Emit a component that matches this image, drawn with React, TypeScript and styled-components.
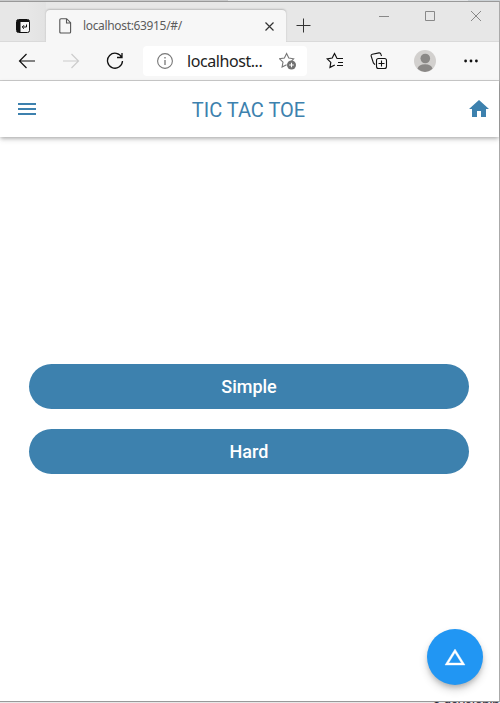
import React from "react";
import styled, { createGlobalStyle } from "styled-components";

const Global = createGlobalStyle`
  * { box-sizing: border-box; }
  html, body { margin: 0; overflow: hidden; }
  svg { display: block; flex: none; }
  button { border: 0; padding: 0; margin: 0; background: none; font: inherit; color: inherit; }
`;

const Desktop = styled.div`
  width: 500px;
  height: 703px;
  overflow: hidden;
  background: linear-gradient(90deg, #c9cacb 0 228px, #e2e4e6 228px 468px, #ccd2d6 468px) top / 100% 1px no-repeat #e8e8e8;
  padding-top: 1px;
`;

const BrowserWindow = styled.div`
  width: 500px;
  height: 701px;
  display: flex;
  flex-direction: column;
  border-top: 1px solid #999;
  border-right: 1px solid #aaa;
  border-bottom: 1px solid #999;
  background: #fff;
`;

const TitleBar = styled.header`
  height: 40px;
  flex: none;
  display: flex;
  align-items: flex-end;
  background: #e7e7e7;
  box-shadow: inset 0 -1px #dadada;
`;

const TabActions = styled.button`
  width: 46px;
  height: 39px;
  margin-bottom: 1px;
  display: flex;
  align-items: flex-start;
  padding: 17px 0 0 16px;
  background: linear-gradient(90deg, #e7e7e7 60%, #e2e2e2);
`;

const Tab = styled.div`
  width: 240px;
  height: 32px;
  display: flex;
  align-items: center;
  padding: 0 11px 0 13px;
  border-radius: 4px 4px 0 0;
  background: #f7f7f7;
  box-shadow: 0 -1px 2px rgba(0, 0, 0, 0.2);
`;

const TabTitle = styled.span`
  flex: 1;
  margin-left: 11px;
  font: 12px/16px "Noto Sans", "Open Sans", sans-serif;
  letter-spacing: -0.34px;
  color: #5c5c5c;
`;

const NewTab = styled.button`
  padding: 0 0 9px 10px;
`;

const WindowControls = styled.div`
  margin-left: auto;
  align-self: flex-start;
  display: flex;
  gap: 35px;
  padding: 9px 17px 0 0;
`;

const Toolbar = styled.nav`
  height: 39px;
  flex: none;
  display: flex;
  align-items: center;
  padding: 0 21px 1px 18px;
  background: #f7f7f7;
  border-bottom: 1px solid #ccc;
`;

const NavButtons = styled.div`
  display: flex;
  gap: 26px;
  width: 125px;
`;

const AddressBar = styled.div`
  width: 164px;
  height: 30px;
  display: flex;
  align-items: center;
  padding: 0 10px 0 14px;
  border-radius: 4px;
  background: #fff;
`;

const Address = styled.span`
  flex: 1;
  margin-left: 14px;
  font: 16px/24px "Noto Sans", "Open Sans", sans-serif;
  letter-spacing: -0.43px;
  color: #222;
`;

const Tools = styled.div`
  display: grid;
  grid-template-columns: 44px 44px 50px 14px;
  align-items: center;
  padding-left: 19px;
`;

const AppBar = styled.header`
  height: 56px;
  flex: none;
  display: grid;
  grid-template-columns: 54px 1fr 56px;
  align-items: center;
  background: #fff;
  color: #3d81ae;
  box-shadow: 0 2px 4px -1px rgba(0, 0, 0, 0.2), 0 4px 5px rgba(0, 0, 0, 0.07), 0 1px 4px rgba(0, 0, 0, 0.12);
`;

const AppTitle = styled.h1`
  margin: 0;
  padding-top: 2px;
  text-align: center;
  font: 400 20px/24px Roboto, sans-serif;
`;

const MenuButton = styled.button`
  padding-left: 15px;
`;

const HomeButton = styled.button`
  padding-left: 24px;
`;

const Body = styled.main`
  flex: 1;
  display: flex;
  flex-direction: column;
  justify-content: center;
  gap: 20px;
  padding: 0 30px 0 29px;
  position: relative;
`;

const LevelButton = styled.button`
  height: 45px;
  border-radius: 23px;
  background: #3d81ae;
  color: #fff;
  font: 500 18px/45px Roboto, sans-serif;
`;

const Fab = styled.button`
  position: absolute;
  right: 16px;
  bottom: 16px;
  width: 56px;
  height: 56px;
  display: grid;
  place-items: center;
  border-radius: 50%;
  background: #2196f3;
  box-shadow: 0 3px 5px -1px rgba(0, 0, 0, 0.2), 0 5px 9px rgba(0, 0, 0, 0.16);
`;

const PageBehind = styled.div`
  height: 1px;
  overflow: hidden;
  padding-left: 433px;
  font: 13px/6px "Liberation Sans", sans-serif;
  white-space: nowrap;
  color: #223;
`;

type StrokeProps = {
  w: number;
  h: number;
  d: string;
  color?: string;
  weight?: number;
};

const Stroke = ({ w, h, d, color = "#111", weight = 1.2 }: StrokeProps) => (
  <svg width={w} height={h} viewBox={`0 0 ${w} ${h}`} fill="none" stroke={color} strokeWidth={weight}>
    <path d={d} />
  </svg>
);

const TabActionsIcon = () => (
  <svg width="14" height="14" viewBox="0 0 14 14" fill="none" stroke="#111">
    <rect x=".5" y=".5" width="13" height="13" rx="2" fill="#f4f4f4" />
    <path d="M1 1h12v2H4.5V13H1Z" fill="#111" stroke="none" />
    <path d="M10.5 5.5v2.5H6.5M8 6.2l-1.8 1.8L8 9.8" strokeWidth="1" />
  </svg>
);

const InfoIcon = () => (
  <svg width="16" height="16" viewBox="0 0 16 16" fill="none" stroke="#777">
    <circle cx="8" cy="8" r="7.4" strokeWidth="1.1" />
    <path d="M8 7v5M8 4v1.4" strokeWidth="1.3" />
  </svg>
);

const AddFavoriteIcon = () => (
  <svg width="18" height="18" viewBox="0 0 18 18" fill="none" stroke="#777">
    <path d="M7.6 12.8 3.1 15l.9-4.8L.6 6.8l4.8-.7L7.6 1.5l2.2 4.6 4.8.7-2 2" strokeWidth="1.1" />
    <circle cx="12.5" cy="13" r="4.5" fill="#717171" stroke="none" />
    <path d="M12.5 10.7v4.6M10.2 13h4.6" stroke="#fff" strokeWidth="1.1" />
  </svg>
);

const CollectionsIcon = () => (
  <svg width="18" height="18" viewBox="0 0 18 18" fill="none" stroke="#111" strokeWidth="1.1">
    <path d="M5 12.6 3.4 11 1.1 3.8Q1 2.5 2.3 2.2L9 .9q1.5-.2 1.9 1.3l.6 1.8" />
    <rect x="6.5" y="6.5" width="10" height="10" rx="2" fill="#f7f7f7" />
    <path d="M11.5 8.5v6M8.5 11.5h6" />
  </svg>
);

const ProfileIcon = () => (
  <svg width="22" height="22" viewBox="0 0 22 22">
    <circle cx="11" cy="11" r="11" fill="#d2d0ce" />
    <circle cx="11.3" cy="8.5" r="4.8" fill="#8a8886" />
    <path d="M3.5 18.8q1-4.5 7.5-4.5t7.5 4.5Q15 22 11 22t-7.5-3.2Z" fill="#8a8886" />
  </svg>
);

export default function App() {
  return (
    <Desktop>
      <Global />
      <BrowserWindow>
        <TitleBar>
          <TabActions aria-label="Tab actions"><TabActionsIcon /></TabActions>
          <Tab>
            <Stroke w={13} h={16} color="#555" weight={1.1} d="M2 .7h5.6l4 4V14q0 1-1 1H2Q.8 15 .8 14V1.7Q.8.7 2 .7M7.5.7V5h4.2" />
            <TabTitle>localhost:63915/#/</TabTitle>
            <Stroke w={11} h={11} color="#333" weight={1.2} d="m1.5 1.5 8 8m0-8-8 8" />
          </Tab>
          <NewTab aria-label="New tab">
            <Stroke w={15} h={15} color="#333" weight={1} d="M7.5.5v14M.5 7.5h14" />
          </NewTab>
          <WindowControls>
            <Stroke w={11} h={11} color="#888" weight={1} d="M0 5.5h10" />
            <Stroke w={11} h={11} color="#888" weight={1} d="M.5 .5h9v9h-9Z" />
            <Stroke w={11} h={11} color="#888" weight={1} d="m0 0 10 10m0-10-10 10" />
          </WindowControls>
        </TitleBar>
        <Toolbar>
          <NavButtons>
            <Stroke w={18} h={18} d="M17 9H1.5M8.5 2l-7 7 7 7" />
            <Stroke w={18} h={18} color="#ccc" d="M1 9h15.5m-7-7 7 7-7 7" />
            <Stroke w={18} h={18} weight={1.3} d="M15.8 5.5a7.5 7.5 0 1 0 .7 3.5M11 5.5h5V1" />
          </NavButtons>
          <AddressBar>
            <InfoIcon />
            <Address>localhost...</Address>
            <AddFavoriteIcon />
          </AddressBar>
          <Tools>
            <Stroke w={18} h={17} d="M10.8 6 8.5 1.5 6.2 6l-5 .8 3.6 3.6-.8 5L8.8 13M10.5 6.5H17M12 10.5h5M11 13.5h6" />
            <CollectionsIcon />
            <ProfileIcon />
            <svg width="14" height="4" viewBox="0 0 14 4" fill="#111">
              <circle cx="1.6" cy="2" r="1.4" /><circle cx="7" cy="2" r="1.4" /><circle cx="12.4" cy="2" r="1.4" />
            </svg>
          </Tools>
        </Toolbar>
        <AppBar>
          <MenuButton aria-label="Menu">
            <svg width="24" height="24" viewBox="0 0 24 24" fill="currentColor"><path d="M3 18h18v-2H3v2zm0-5h18v-2H3v2zm0-7v2h18V6H3z" /></svg>
          </MenuButton>
          <AppTitle>TIC TAC TOE</AppTitle>
          <HomeButton aria-label="Home">
            <svg width="24" height="24" viewBox="0 0 24 24" fill="currentColor"><path d="M10 20v-6h4v6h5v-8h3L12 3 2 12h3v8z" /></svg>
          </HomeButton>
        </AppBar>
        <Body>
          <LevelButton>Simple</LevelButton>
          <LevelButton>Hard</LevelButton>
          <Fab aria-label="Change level">
            <svg width="24" height="24" viewBox="0 0 24 24" fill="#fff" stroke="#fff" strokeWidth=".4"><path d="M12 7.77 18.39 18H5.61L12 7.77M12 4 2 20h20L12 4z" /></svg>
          </Fab>
        </Body>
      </BrowserWindow>
      <PageBehind>a developing</PageBehind>
    </Desktop>
  );
}
